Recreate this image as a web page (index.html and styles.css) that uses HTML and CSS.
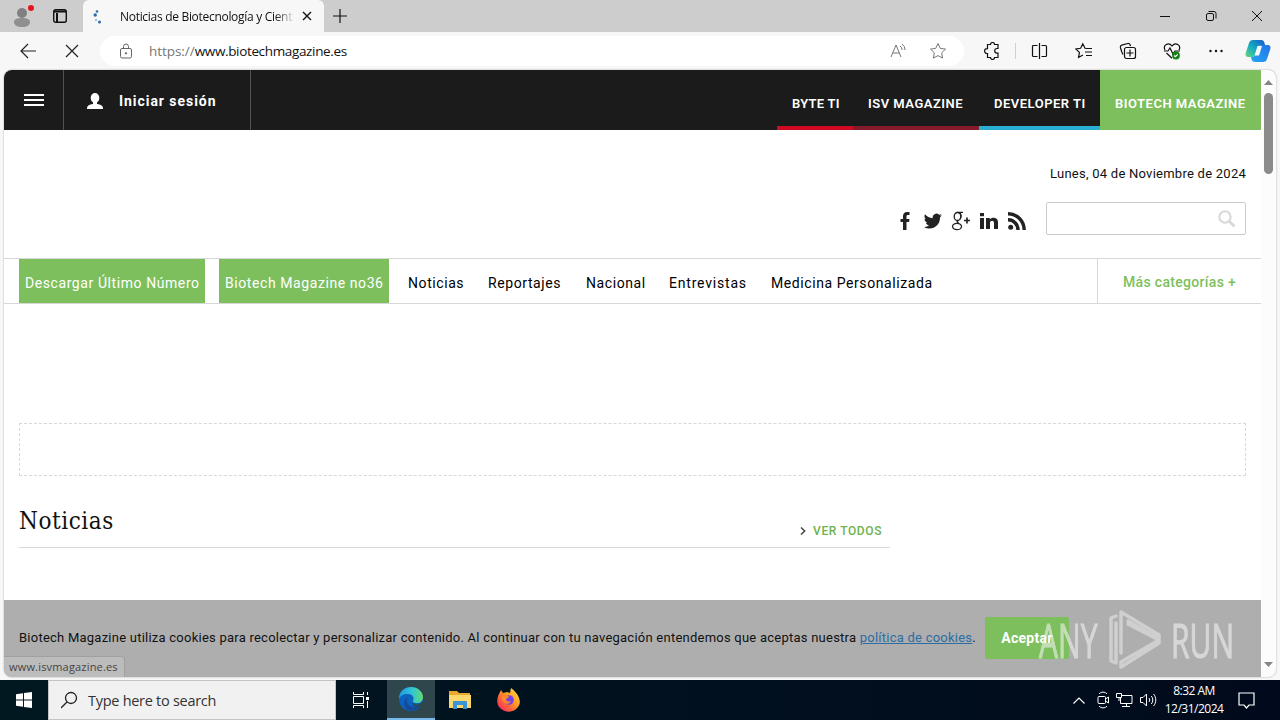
FILE: index.html
```html
<!DOCTYPE html>
<html lang="es">
<head>
    <meta charset="UTF-8">
    <meta name="viewport" content="width=device-width, initial-scale=1.0">
    <title>Noticias de Biotecnología y Ciencia</title>
    <link rel="stylesheet" href="styles.css">
</head>
<body>
    <!-- Tab strip -->
    <div class="tabstrip">
        <svg class="profile" width="24" height="26" viewBox="0 0 24 26">
            <circle cx="12" cy="10" r="5" fill="#808080"/>
            <path d="M4 19c0-3 3-4 8-4s8 1 8 4c0 3-3 5-8 5s-8-2-8-5z" fill="#8f8f8f"/>
            <circle cx="21" cy="5" r="3" fill="#e3141c"/>
        </svg>
        <svg class="tab-actions" width="16" height="16" viewBox="0 0 16 16" fill="none" stroke="#111" stroke-width="1.4">
            <rect x="1.7" y="1.7" width="12.6" height="12.6" rx="2"/>
            <path d="M2 3.5h12M5 5v9" stroke-width="2"/>
        </svg>
        <div class="tab">
            <svg width="12" height="16" viewBox="0 0 12 16" fill="#2b6ca3">
                <circle cx="6" cy="3.500" r="1.300"/><circle cx="4.200" cy="7" r="1.700"/><circle cx="5" cy="12" r="1" fill="#7fb2dd"/><circle cx="8.500" cy="14" r="1.500"/>
            </svg>
            <span class="tab-title">Noticias de Biotecnología y Cient</span>
            <svg width="10" height="10" viewBox="0 0 10 10" stroke="#111" stroke-width="1.4"><path d="M1 1l8 8M9 1l-8 8"/></svg>
        </div>
        <svg class="new-tab" width="14" height="14" viewBox="0 0 14 14" stroke="#111" stroke-width="1.2"><path d="M7 0v14M0 7h14"/></svg>
        <div class="window-buttons">
            <svg width="12" height="12" viewBox="0 0 12 12" stroke="#111" fill="none"><path d="M1 6.5h10"/></svg>
            <svg width="12" height="12" viewBox="0 0 12 12" stroke="#111" fill="none"><rect x="1.5" y="3.5" width="7" height="7" rx="1.5"/><path d="M3.5 1.5h5.500a2 2 0 0 1 2 2v5"/></svg>
            <svg width="12" height="12" viewBox="0 0 12 12" stroke="#111" fill="none"><path d="M1 1l10 10M11 1L1 11"/></svg>
        </div>
    </div>

    <!-- Toolbar -->
    <div class="toolbar">
        <svg class="back" width="17" height="16" viewBox="0 0 17 16" fill="none" stroke="#222" stroke-width="1.2"><path d="M17 8H2M9 1L2 8l7 7"/></svg>
        <svg class="stop" width="14" height="14" viewBox="0 0 14 14" stroke="#222" stroke-width="1.2"><path d="M1 1l12 12M13 1L1 13"/></svg>
        <div class="address">
            <svg class="lock" width="14" height="16" viewBox="0 0 14 16" fill="none" stroke="#666"><rect x="1.500" y="5.500" width="11" height="9.500" rx="1.500"/><path d="M4.500 5.500V3.500a2.500 2.500 0 0 1 5 0v2"/><circle cx="7" cy="10.300" r=".7" fill="#666"/></svg>
            <span class="url"><span class="scheme">https://</span>www.biotechmagazine.es</span>
            <svg class="read" width="17" height="16" viewBox="0 0 17 16" fill="none" stroke="#777"><path d="M1 14L6 2l5 12M2.800 10h6.400M10 3a4 4 0 0 1 2 4M12 1a7 7 0 0 1 3 6"/></svg>
            <svg class="star" width="18" height="18" viewBox="0 0 18 18" fill="none" stroke="#777"><path d="M9 1.500l2.300 4.900 5.200.7-3.800 3.700.9 5.300L9 13.600l-4.600 2.500.9-5.300-3.800-3.700 5.200-.7z"/></svg>
        </div>
        <div class="tools">
            <svg width="18" height="18" viewBox="0 0 18 18" fill="none" stroke="#111" stroke-width="1.200"><path d="M4.500 2.500h3a2 2 0 0 1 4 0h3.500v4h-1a2.300 2.300 0 0 0 0 4.600h1v4.400h-3.500a2 2 0 0 1-4 0h-3v-4H4a2.400 2.400 0 0 1 0-4.800h.5z"/></svg>
            <span class="divider"></span>
            <svg class="split" width="18" height="18" viewBox="0 0 18 18" fill="none" stroke="#111" stroke-width="1.200"><path d="M6.500 3.500h-4a1 1 0 0 0-1 1v9a1 1 0 0 0 1 1h4M10.500 3.500h4a1 1 0 0 1 1 1v9a1 1 0 0 1-1 1h-4M8.500 1v16"/></svg>
            <svg width="18" height="18" viewBox="0 0 18 18" fill="none" stroke="#111" stroke-width="1.200"><path d="M12 6.500l-2-.2L7.800 1.800 5.600 6.300l-4.800.7 3.600 3.400-.8 5 4.300-2.400M11 6.500h6M10 10h7M11 13.500h6"/></svg>
            <svg width="18" height="18" viewBox="0 0 18 18" fill="none" stroke="#111" stroke-width="1.200"><path d="M4 12.500L2.800 10 1.400 5.500a2 2 0 0 1 1.300-2.400l6-1.600a2 2 0 0 1 2.500 1.500l.3 1.200"/><rect x="5.500" y="5.500" width="11" height="11" rx="2"/><path d="M11 7.500v7M7.500 11h7"/></svg>
            <svg width="18" height="18" viewBox="0 0 18 18" fill="none" stroke="#111" stroke-width="1.200"><path d="M2 8C-.5 3 5.500-.5 9 4c3.500-4.500 9.500-1 7 4M3.500 11L9 16.300M1 9h4l2-3 3 6 2-3h5"/><circle cx="13" cy="13.500" r="3.900" fill="#148114" stroke="none"/><path d="M11.200 13.500l1.200 1.200 2.300-2.400" stroke="#fff"/></svg>
            <svg width="18" height="18" viewBox="0 0 18 18" fill="#111"><circle cx="3.500" cy="9" r="1.200"/><circle cx="9" cy="9" r="1.200"/><circle cx="14.500" cy="9" r="1.200"/></svg>
            <svg class="copilot" width="26" height="24" viewBox="0 0 26 24">
                <defs>
                    <linearGradient id="cpA" x1="0" y1="1" x2="1" y2="0"><stop offset="0" stop-color="#6ad67c"/><stop offset=".45" stop-color="#14aec0"/><stop offset="1" stop-color="#1858c9"/></linearGradient>
                    <linearGradient id="cpB" x1="0" y1="1" x2="1" y2="0"><stop offset="0" stop-color="#24a5f2"/><stop offset="1" stop-color="#2473e6"/></linearGradient>
                </defs>
                <path d="M8 1h8c2 0 3 1 3.500 3l.5 2h-4c-2 0-3 1-3.500 3l-2 6c-.5 2-1.500 3-3.500 3H3c-2 0-3-2-2.300-4L4 4c.6-2 2-3 4-3z" fill="url(#cpA)"/>
                <path d="M18 23h-8c-2 0-3-1-3.500-3L6 18h1c2 0 3-1 3.500-3l2-6c.5-2 1.500-3 3.500-3h7c2 0 3 2 2.300 4L22 20c-.6 2-2 3-4 3z" fill="url(#cpB)"/>
                <path d="M12.500 7h4.500l-3 9.500H9.500z" fill="#f5f8fc"/>
            </svg>
        </div>
    </div>

    <!-- Browser viewport -->
    <div class="viewport">
        <div class="page">
            <header class="topbar">
                <div class="menu-button"><span></span><span></span><span></span></div>
                <div class="login">
                    <svg width="16" height="16" viewBox="0 0 16 16" fill="#fff"><ellipse cx="8" cy="5" rx="4.300" ry="5"/><path d="M6 9h4v2c4 .5 6 1.500 6 5H0c0-3.500 2-4.500 6-5z"/></svg>
                    <span>Iniciar sesión</span>
                </div>
                <nav class="sites">
                    <a class="byte">BYTE TI</a>
                    <a class="isv">ISV MAGAZINE</a>
                    <a class="developer">DEVELOPER TI</a>
                    <a class="biotech">BIOTECH MAGAZINE</a>
                </nav>
            </header>

            <div class="masthead">
                <div class="date">Lunes, 04 de Noviembre de 2024</div>
                <div class="masthead-row">
                    <div class="social">
                        <svg width="20" height="20" viewBox="0 0 20 20"><path d="M8 19V11H5.500V8H8V5.500C8 2.500 9.500 1 12 1h2.500v3H13c-1.200 0-1.500.6-1.500 1.600V8h3l-.4 3h-2.600v8z"/></svg>
                        <svg width="20" height="20" viewBox="0 0 20 20"><path d="M19 4.300c-.7.3-1.400.5-2.100.6.8-.5 1.300-1.200 1.600-2-.7.400-1.500.7-2.400.9A3.800 3.800 0 0 0 9.700 7.300C6.600 7.100 3.800 5.600 2 3.300c-1 1.700-.5 3.900 1.200 5-.6 0-1.200-.2-1.700-.5 0 1.800 1.200 3.400 3 3.800-.5.100-1.100.2-1.700.1.500 1.500 1.900 2.600 3.500 2.600A7.600 7.600 0 0 1 1 15.900c6.800 4.200 16.200.2 16-9.600.8-.5 1.500-1.200 2-2z"/></svg>
                        <svg width="20" height="20" viewBox="0 0 20 20" fill="none" stroke="#222" stroke-width="1.300"><ellipse cx="6.500" cy="5.500" rx="3.300" ry="4"/><ellipse cx="6" cy="15.500" rx="4.500" ry="3.200"/><path d="M6 1.300h6M9 2c1.500 2 1.500 4 0 6M7.500 9.300c-2.500 1-1.500 2 .500 3.200"/><path d="M13 9.500h6M16 6.500v6" stroke-width="1.700"/></svg>
                        <svg width="20" height="20" viewBox="0 0 20 20"><path d="M1 7h4v11H1zM1 2h4v3.300H1zM7 7h3.800v1.600C12.500 5.700 19 6 19 11v7h-4v-6c0-3-4-2.800-4 0v6H7z"/></svg>
                        <svg width="20" height="20" viewBox="0 0 20 20" fill="none" stroke="#222" stroke-width="3.400"><circle cx="3.700" cy="16.200" r="2.500" fill="#222" stroke="none"/><path d="M1 8.800c5.500 0 10 4.500 10 10.200M1 2.700c9 0 16.200 7.300 16.200 16.300"/></svg>
                    </div>
                    <div class="search">
                        <svg width="18" height="18" viewBox="0 0 18 18" fill="none" stroke="#d8d8d8"><circle cx="7" cy="7" r="5.700" stroke-width="2"/><path d="M11.500 11.500l5 5" stroke-width="3"/></svg>
                    </div>
                </div>
            </div>

            <nav class="categories">
                <a class="green first">Descargar Último Número</a>
                <a class="green second">Biotech Magazine no36</a>
                <a class="noticias">Noticias</a>
                <a class="reportajes">Reportajes</a>
                <a class="nacional">Nacional</a>
                <a class="entrevistas">Entrevistas</a>
                <a class="medicina">Medicina Personalizada</a>
                <a class="more">Más categorías +</a>
            </nav>

            <main>
                <div class="banner"></div>
                <div class="section-head">
                    <h2>Noticias</h2>
                    <a><svg width="6" height="8" viewBox="0 0 6 8" fill="none" stroke="#444" stroke-width="1.500"><path d="M1 .5L4.700 4 1 7.500"/></svg>VER TODOS</a>
                </div>
            </main>

            <div class="cookies">
                <p>Biotech Magazine utiliza cookies para recolectar y personalizar contenido. Al continuar con tu navegación entendemos que aceptas nuestra <a>política de cookies</a>.</p>
                <button>Aceptar</button>
            </div>
            <div class="status">www.isvmagazine.es</div>
        </div>
        <div class="scrollbar">
            <svg width="9" height="5" viewBox="0 0 9 5"><path d="M0 5L4.500 0 9 5z" fill="#858585"/></svg>
            <div class="thumb"></div>
            <svg width="9" height="5" viewBox="0 0 9 5"><path d="M0 0h9L4.500 5z" fill="#858585"/></svg>
        </div>
        <div class="watermark">
            <span>ANY</span>
            <svg width="56" height="62" viewBox="0 0 56 62" fill="none" stroke="#e6e6e6" stroke-width="3.500" stroke-linejoin="round" stroke-linecap="round"><path d="M8 7L3 9v43l5 2V14M13 44V3l38 23v4L20 12M51 31v3L13 58v-5l38-22L20 15"/></svg>
            <span>RUN</span>
        </div>
    </div>

    <!-- Taskbar -->
    <div class="taskbar">
        <div class="start"><svg width="16" height="16" viewBox="0 0 16 16" fill="#fff"><path d="M0 2.200L7 1.200v6.300H0zM8 1l8-1v7.500H8zM0 8.500h7v6.300l-7-1zM8 8.500h8V16l-8-1z"/></svg></div>
        <div class="task-search">
            <svg width="18" height="18" viewBox="0 0 18 18" fill="none" stroke="#222" stroke-width="1.300"><circle cx="10" cy="7" r="5.500"/><path d="M6 11l-6 6"/></svg>
            <span>Type here to search</span>
        </div>
        <div class="app"><svg width="16" height="16" viewBox="0 0 16 16" fill="none" stroke="#fff"><path d="M.5 0v2.500h10V0M.5 16v-2.500h10V16M.5 4.500h10v7H.5zM14.500 0v3M14.500 9v7"/><path d="M13 5h3v3h-3z" fill="#fff" stroke="none"/></svg></div>
        <div class="app active">
            <svg width="24" height="24" viewBox="0 0 24 24">
                <defs>
                    <linearGradient id="edge" x1="0" y1="0" x2="1" y2="0"><stop offset="0" stop-color="#1d9ce6"/><stop offset=".55" stop-color="#32c5d6"/><stop offset="1" stop-color="#60dc6c"/></linearGradient>
                </defs>
                <circle cx="12" cy="12" r="12" fill="#0c62bd"/>
                <path d="M0 12C0 4 6 0 12 0c7 0 12 5 12 10 0 4-3 6-6 6-3 0-5-1-4-2.500 2-3-1-6.500-5-6.500-5 0-8 2-9 5z" fill="url(#edge)"/>
                <path d="M9 10c-3 4 0 10 6 10 3 0 5-1 7-2-3 5-8 7-13 5C4 21 4 12 9 10z" fill="#134b99"/>
                <path d="M13 15.500c2 3 7 3 11-1v3l-2 1.500c-4 2-9 0-9-3.500z" fill="#30464d"/>
            </svg>
        </div>
        <div class="app">
            <svg width="22" height="20" viewBox="0 0 22 20"><path d="M0 1h8l2 2h11v15H0z" fill="#e8a92d"/><path d="M0 5h22v13H0z" fill="#fbd86e"/><path d="M4 19v-7a1 1 0 0 1 1-1h12a1 1 0 0 1 1 1v7h-4v-4H8v4z" fill="#3a94d6"/></svg>
        </div>
        <div class="app">
            <svg width="24" height="24" viewBox="0 0 24 24">
                <defs><linearGradient id="fox" x1="1" y1="0" x2="0" y2="1"><stop offset="0" stop-color="#fff04a"/><stop offset=".45" stop-color="#ff9222"/><stop offset="1" stop-color="#f5156c"/></linearGradient></defs>
                <path d="M2 6l2-4 2 3 4-1 3 1 1-5c3 2 4 4 6 6 3 5 4 9 1 13-4 6-13 6-18 1C-1 16 0 10 2 6z" fill="url(#fox)"/>
                <circle cx="12" cy="12" r="4.800" fill="#7542e5"/><path d="M5 9c2-3 6-2 7 0l-3 2c0 3 3 3 5 2-2 5-9 3-9-4z" fill="#ff8a25"/>
            </svg>
        </div>
        <div class="tray">
            <svg width="12" height="7" viewBox="0 0 12 7" fill="none" stroke="#fff" stroke-width="1.200"><path d="M.5 6.500L6 1l5.500 5.500"/></svg>
            <svg width="12" height="18" viewBox="0 0 12 18" fill="none" stroke="#fff"><rect x="1" y="5.500" width="7.500" height="7" rx="1"/><path d="M8.500 8l3-2v6l-3-2M2 3c2-2.500 6-2.500 8 0M2 15c2 2.500 6 2.500 8 0"/></svg>
            <svg width="17" height="16" viewBox="0 0 17 16" fill="none" stroke="#fff"><path d="M6 3.500h10v8H4.500V6M10.500 12v3M6 14.500h8M.5 1.500h5v4h-5zM3 6v3"/></svg>
            <svg width="17" height="14" viewBox="0 0 17 14" fill="none" stroke="#fff"><path d="M.5 4.500h2.500L6.500 1v12L3 9.500H.5zM9 5a3 3 0 0 1 0 4M11.300 3a6 6 0 0 1 0 8M13.500 1c3 3 3 9 0 12"/></svg>
            <div class="clock"><span>8:32 AM</span><span>12/31/2024</span></div>
            <svg width="17" height="17" viewBox="0 0 17 17" fill="none" stroke="#fff" stroke-width="1.200"><path d="M1 1h15v12h-5l-2.500 3L6 13H1z"/></svg>
        </div>
    </div>
</body>
</html>
```
FILE: styles.css
```css
* {
    box-sizing: border-box;
}

body {
    margin: 0;
    width: 1280px;
    height: 720px;
    overflow: hidden;
    display: flex;
    flex-direction: column;
    font-family: "Open Sans", "Noto Sans", sans-serif;
    background-color: #f7f7f7;
}

svg {
    display: block;
    flex: none;
}

/* Tab strip */
.tabstrip {
    height: 32px;
    flex: none;
    display: flex;
    align-items: center;
    background-color: #cdcdcd;
}

.profile {
    margin-left: 10px;
}

.tab-actions {
    margin-left: 18px;
}

.tab {
    width: 241px;
    height: 32px;
    margin-left: 15px;
    padding: 0 12px 0 8px;
    display: flex;
    align-items: center;
    background-color: #f7f7f7;
    border-radius: 6px 6px 0 0;
}

.tab-title {
    width: 175px;
    margin: 0 7px 0 17px;
    white-space: nowrap;
    font-size: 12px;
    letter-spacing: -0.3px;
    color: #111;
    -webkit-mask-image: linear-gradient(to right, #000 155px, transparent);
    mask-image: linear-gradient(to right, #000 155px, transparent);
}

.new-tab {
    margin-left: 9px;
}

.window-buttons {
    display: flex;
    gap: 34px;
    margin-left: auto;
    padding-right: 17px;
}

/* Toolbar */
.toolbar {
    height: 38px;
    flex: none;
    display: flex;
    align-items: center;
    background-color: #f7f7f7;
}

.back {
    margin-left: 19px;
}

.stop {
    margin-left: 29px;
}

.address {
    width: 864px;
    height: 30px;
    margin-left: 21px;
    padding: 0 17px 0 19px;
    display: flex;
    align-items: center;
    border-radius: 15px;
    background-color: #fff;
}

.url {
    margin-left: 16px;
    font-size: 13.5px;
    letter-spacing: -0.35px;
    color: #111;
}

.scheme {
    letter-spacing: -0.05px;
    color: #767676;
}

.read {
    margin-left: auto;
}

.star {
    margin-left: 22px;
}

.tools {
    display: flex;
    align-items: center;
    gap: 26px;
    margin-left: 19px;
}

.divider {
    width: 1px;
    height: 16px;
    margin: 0 -11px 0 -12px;
    background-color: #d0d0d0;
}

.copilot {
    margin-left: -6px;
}

/* Viewport */
.viewport {
    position: relative;
    width: 1272px;
    height: 607px;
    margin-left: 4px;
    flex: none;
    display: flex;
    overflow: hidden;
    border-radius: 8px;
    background-color: #fcfcfc;
    box-shadow: 0 0 2px rgba(0, 0, 0, 0.35);
}

.page {
    position: relative;
    width: 1257px;
    display: flex;
    flex-direction: column;
    background-color: #fff;
    font-family: Roboto, "Liberation Sans", sans-serif;
    color: #111;
}

.topbar {
    height: 60px;
    display: flex;
    background-color: #1b1b1b;
    color: #fff;
}

.menu-button {
    width: 60px;
    padding: 24px 19px 0 20px;
    border-right: 1px solid #525252;
}

.menu-button span {
    display: block;
    width: 20px;
    height: 2px;
    margin-bottom: 3px;
    background-color: #fff;
}

.login {
    width: 187px;
    padding: 1px 0 0 23px;
    display: flex;
    align-items: center;
    gap: 16px;
    border-right: 1px solid #525252;
    font-size: 14px;
    font-weight: 700;
    letter-spacing: 0.95px;
}

.sites {
    display: flex;
    margin-left: auto;
}

.sites a {
    padding: 7px 0 0 15px;
    line-height: 53px;
    white-space: nowrap;
    font-size: 13px;
    font-weight: 600;
    letter-spacing: 0.5px;
}

.sites .byte {
    width: 76px;
    border-bottom: 4px solid #d00a20;
    letter-spacing: 0.25px;
}

.isv {
    width: 126px;
    border-bottom: 4px solid #841b28;
}

.developer {
    width: 121px;
    border-bottom: 4px solid #2baed4;
}

.biotech {
    width: 161px;
    background-color: #7dbf5d;
}

.masthead {
    height: 128px;
    padding: 36px 15px 0;
}

.date {
    height: 16px;
    line-height: 16px;
    text-align: right;
    font-size: 13px;
    letter-spacing: 0.25px;
}

.masthead-row {
    display: flex;
    justify-content: flex-end;
    margin-top: 20px;
}

.social {
    display: flex;
    gap: 8px;
    margin: 9px 19px 0 0;
    fill: #222;
}

.search {
    width: 200px;
    height: 33px;
    padding: 7px 9px;
    display: flex;
    justify-content: flex-end;
    border: 1px solid #ccc;
    border-radius: 2px;
}

/* Category menu */
.categories {
    height: 46px;
    padding-left: 15px;
    display: flex;
    border-top: 1px solid #d8d8d8;
    border-bottom: 1px solid #d8d8d8;
    line-height: 48px;
    font-size: 14px;
    letter-spacing: 0.58px;
    white-space: nowrap;
    color: #000;
}

.green {
    height: 44px;
    padding-left: 6px;
    background-color: #7dbf5d;
    color: #fff;
}

.first {
    width: 186px;
    margin-right: 14px;
}

.second {
    width: 170px;
}

.noticias {
    width: 80px;
    margin-left: 19px;
}

.reportajes {
    width: 98px;
}

.nacional {
    width: 83px;
}

.entrevistas {
    width: 102px;
    letter-spacing: 0.8px;
}

.more {
    width: 164px;
    margin-left: auto;
    padding-left: 25px;
    border-left: 1px solid #d8d8d8;
    line-height: 46px;
    font-weight: 500;
    letter-spacing: 0.32px;
    color: #7dbf5d;
}

/* Content */
main {
    flex: 1;
    padding: 119px 15px 0;
}

.banner {
    height: 53px;
    border: 1px dashed #d8d8d8;
}

.section-head {
    width: 871px;
    height: 72px;
    padding-right: 8px;
    display: flex;
    justify-content: space-between;
    border-bottom: 1px solid #d8d8d8;
}

.section-head h2 {
    margin: 28px 0 0;
    line-height: 34px;
    font-family: "DejaVu Serif Condensed", "DejaVu Serif", serif;
    font-size: 24px;
    font-weight: 400;
    font-stretch: condensed;
    letter-spacing: 0.55px;
}

.section-head a {
    height: 16px;
    margin-top: 47px;
    display: flex;
    align-items: center;
    gap: 7px;
    font-size: 12px;
    font-weight: 500;
    letter-spacing: 0.6px;
    color: #6fb24f;
}

/* Cookie notice */
.cookies {
    height: 77px;
    padding: 17px 15px 0;
    display: flex;
    background-color: #aeaeae;
}

.cookies p {
    width: 966px;
    margin: 0;
    line-height: 42px;
    white-space: nowrap;
    font-size: 13px;
    letter-spacing: 0.238px;
}

.cookies a {
    color: #2c6da4;
    text-decoration: underline;
}

.cookies button {
    width: 84px;
    height: 42px;
    padding: 0;
    border: 0;
    border-radius: 2px;
    background-color: #7dbf5d;
    color: #fff;
    font-family: inherit;
    font-size: 14px;
    font-weight: 700;
    letter-spacing: 0.3px;
}

.status {
    position: absolute;
    left: 0;
    bottom: 0;
    width: 121px;
    height: 21px;
    padding-left: 5px;
    line-height: 20px;
    border: 1px solid #a0a0a0;
    border-width: 1px 1px 0 0;
    border-radius: 0 4px 0 0;
    background-color: #bcbcbc;
    font-family: "Open Sans", sans-serif;
    font-size: 11px;
    letter-spacing: 0.18px;
    color: #444;
}

.scrollbar {
    width: 15px;
    padding: 10px 0;
    display: flex;
    flex-direction: column;
    align-items: center;
}

.scrollbar .thumb {
    width: 9px;
    height: 81px;
    margin: 8px 0 auto;
    border-radius: 5px;
    background-color: #8b8b8b;
}

/* Overlay logo */
.watermark {
    position: absolute;
    left: 1035px;
    top: 539px;
    display: flex;
    align-items: center;
    gap: 7px;
    opacity: 0.6;
    color: #f2f2f2;
    font-family: "Open Sans", sans-serif;
    font-size: 47px;
    line-height: 62px;
}

.watermark span {
    width: 62px;
    transform: scaleX(0.64);
    transform-origin: left;
    -webkit-text-stroke: 1px #f2f2f2;
}

/* Taskbar */
.taskbar {
    height: 40px;
    margin-top: 3px;
    flex: none;
    display: flex;
    background: linear-gradient(to right, #011821, #010a1c);
    color: #fff;
}

.start,
.app {
    width: 49px;
    display: flex;
    align-items: center;
    justify-content: center;
}

.start {
    width: 48px;
}

.app.active {
    width: 48px;
    margin-left: 2px;
    border-bottom: 2px solid #76b9ed;
    background-color: #30464d;
}

.task-search {
    width: 288px;
    padding-left: 12px;
    display: flex;
    align-items: center;
    gap: 9px;
    border: 1px solid #c4c4c4;
    background-color: #f1f1f1;
    font-size: 14.5px;
    letter-spacing: -0.28px;
    color: #333;
}

.tray {
    margin-left: auto;
    padding-right: 25px;
    display: flex;
    align-items: center;
}

.tray svg {
    margin-right: 7px;
}

.tray svg:nth-child(4) {
    margin-right: 8px;
}

.tray svg:first-child {
    margin-right: 12px;
}

.tray svg:last-child {
    margin: 0 0 0 15px;
}

.clock {
    width: 58px;
    display: flex;
    flex-direction: column;
    align-items: center;
    line-height: 18px;
    font-size: 12px;
    letter-spacing: -0.5px;
}
```
